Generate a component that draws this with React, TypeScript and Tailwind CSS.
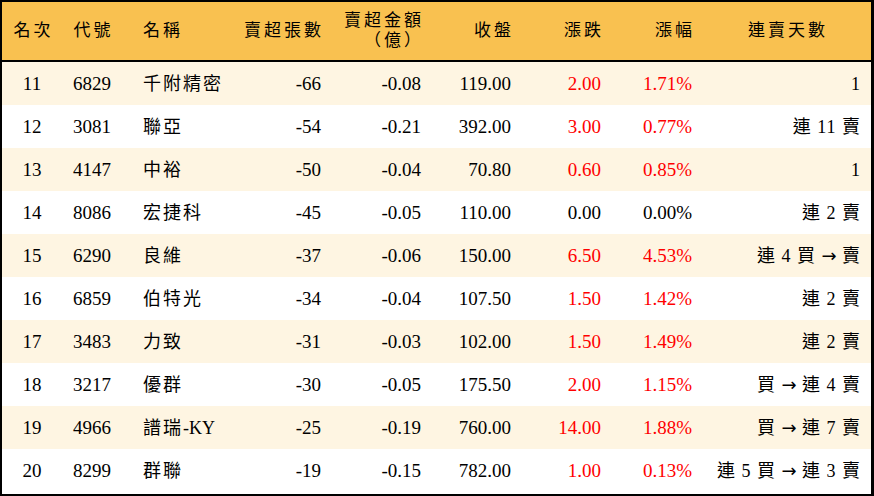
import React from "react";

type Row = {
  rank: string;
  code: string;
  name: string;
  qty: string;
  amt: string;
  close: string;
  chg: string;
  pct: string;
  days: string;
  red: boolean;
};

const rows: Row[] = [
  { rank: "11", code: "6829", name: "千附精密", qty: "-66", amt: "-0.08", close: "119.00", chg: "2.00", pct: "1.71%", days: "1", red: true },
  { rank: "12", code: "3081", name: "聯亞", qty: "-54", amt: "-0.21", close: "392.00", chg: "3.00", pct: "0.77%", days: "連 11 賣", red: true },
  { rank: "13", code: "4147", name: "中裕", qty: "-50", amt: "-0.04", close: "70.80", chg: "0.60", pct: "0.85%", days: "1", red: true },
  { rank: "14", code: "8086", name: "宏捷科", qty: "-45", amt: "-0.05", close: "110.00", chg: "0.00", pct: "0.00%", days: "連 2 賣", red: false },
  { rank: "15", code: "6290", name: "良維", qty: "-37", amt: "-0.06", close: "150.00", chg: "6.50", pct: "4.53%", days: "連 4 買 → 賣", red: true },
  { rank: "16", code: "6859", name: "伯特光", qty: "-34", amt: "-0.04", close: "107.50", chg: "1.50", pct: "1.42%", days: "連 2 賣", red: true },
  { rank: "17", code: "3483", name: "力致", qty: "-31", amt: "-0.03", close: "102.00", chg: "1.50", pct: "1.49%", days: "連 2 賣", red: true },
  { rank: "18", code: "3217", name: "優群", qty: "-30", amt: "-0.05", close: "175.50", chg: "2.00", pct: "1.15%", days: "買 → 連 4 賣", red: true },
  { rank: "19", code: "4966", name: "譜瑞-KY", qty: "-25", amt: "-0.19", close: "760.00", chg: "14.00", pct: "1.88%", days: "買 → 連 7 賣", red: true },
  { rank: "20", code: "8299", name: "群聯", qty: "-19", amt: "-0.15", close: "782.00", chg: "1.00", pct: "0.13%", days: "連 5 買 → 連 3 賣", red: true },
];

const grid =
  "grid grid-cols-[60px_60px_108px_101px_100px_90px_90px_91px_169px]";

function Name({ text }: { text: string }) {
  const idx = text.indexOf("-");
  if (idx < 0) return <span className="tracking-[2px]">{text}</span>;
  return (
    <>
      <span className="tracking-[2px]">{text.slice(0, idx)}</span>
      <span>{text.slice(idx)}</span>
    </>
  );
}

function Days({ text }: { text: string }) {
  const parts = text.split("→");
  return (
    <>
      {parts.map((p, i) => (
        <React.Fragment key={i}>
          {i > 0 && (
            <span
              className="tracking-normal"
              style={{ fontFamily: '"DejaVu Sans", sans-serif' }}
            >
              →
            </span>
          )}
          <span>{p}</span>
        </React.Fragment>
      ))}
    </>
  );
}

export default function App() {
  return (
    <div
      className="w-[874px] h-[496px] bg-white text-black"
      style={{ fontFamily: '"Liberation Serif", "Noto Sans CJK TC", serif' }}
    >
      <div className="w-[874px] h-[496px] border-t-2 border-l-2 border-r-[3px] border-b-2 border-black flex flex-col">
        <div className={`${grid} h-[60px] bg-[#f9c150] border-b-2 border-black text-[17px] leading-[20px] tracking-[3px] items-center`}>
          <div className="text-center pl-[3px]">名次</div>
          <div className="text-center pl-[3px]">代號</div>
          <div className="pl-[21px]">名稱</div>
          <div className="text-right pr-[7px]">賣超張數</div>
          <div className="text-right pr-[7px] flex flex-col items-end">
            <span>賣超金額</span>
            <span>（億）</span>
          </div>
          <div className="text-right pr-[7px]">收盤</div>
          <div className="text-right pr-[7px]">漲跌</div>
          <div className="text-right pr-[7px]">漲幅</div>
          <div className="text-center pl-[3px]">連賣天數</div>
        </div>
        {rows.map((r, i) => (
          <div
            key={r.rank}
            className={`${grid} h-[43px] items-center text-[19px] leading-[20px] ${
              i % 2 === 0 ? "bg-[#fef5e2]" : "bg-white"
            }`}
          >
            <div className="text-center">{r.rank}</div>
            <div className="text-center">{r.code}</div>
            <div className="pl-[21px] text-[18px]">
              <Name text={r.name} />
            </div>
            <div className="text-right pr-[10px]">{r.qty}</div>
            <div className="text-right pr-[10px]">{r.amt}</div>
            <div className="text-right pr-[10px]">{r.close}</div>
            <div className={`text-right pr-[10px] ${r.red ? "text-[#ff0000]" : ""}`}>{r.chg}</div>
            <div className={`text-right pr-[10px] ${r.red ? "text-[#ff0000]" : ""}`}>{r.pct}</div>
            <div className="text-right pr-[10px] text-[18px] tracking-[1px] whitespace-nowrap">
              <Days text={r.days} />
            </div>
          </div>
        ))}
      </div>
    </div>
  );
}
